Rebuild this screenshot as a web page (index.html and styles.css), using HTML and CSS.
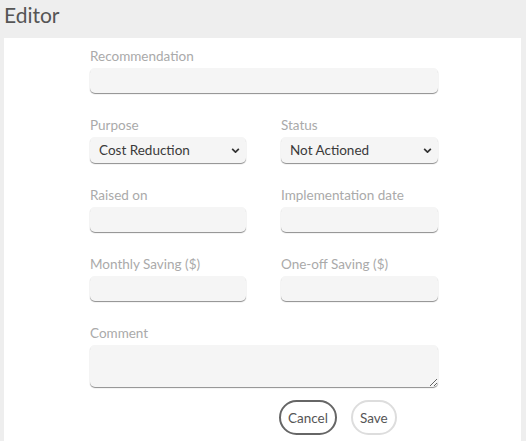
FILE: index.html
```html
<!DOCTYPE html>
<html lang="en">
  <head>
    <meta charset="UTF-8" />
    <meta name="viewport" content="width=device-width, initial-scale=1.0" />
    <title>Editor</title>
    <link rel="stylesheet" href="styles.css">
  </head>
  <body>
    <header class="editor-header">Editor</header>
    <main class="editor-panel">
      <form class="editor-form">
        <div class="editor-field editor-wide">
          <label for="recommendation">Recommendation</label>
          <input id="recommendation" type="text" />
        </div>

        <div class="editor-field">
          <label for="purpose">Purpose</label>
          <div class="editor-select">
            <select id="purpose">
              <option>Cost Reduction</option>
            </select>
            <svg viewBox="0 0 10 6" aria-hidden="true"><path d="M1 1l4 4 4-4" /></svg>
          </div>
        </div>
        <div class="editor-field">
          <label for="status">Status</label>
          <div class="editor-select">
            <select id="status">
              <option>Not Actioned</option>
            </select>
            <svg viewBox="0 0 10 6" aria-hidden="true"><path d="M1 1l4 4 4-4" /></svg>
          </div>
        </div>

        <div class="editor-field">
          <label for="raised">Raised on</label>
          <input id="raised" type="text" />
        </div>
        <div class="editor-field">
          <label for="implemented">Implementation date</label>
          <input id="implemented" type="text" />
        </div>

        <div class="editor-field">
          <label for="monthly">Monthly Saving ($)</label>
          <input id="monthly" type="text" />
        </div>
        <div class="editor-field">
          <label for="oneoff">One-off Saving ($)</label>
          <input id="oneoff" type="text" />
        </div>

        <div class="editor-field editor-wide">
          <label for="comment">Comment</label>
          <textarea id="comment"></textarea>
        </div>

        <div class="editor-actions">
          <button type="button" class="btn-cancel">Cancel</button>
          <button type="button" class="btn-save">Save</button>
        </div>
      </form>
    </main>
  </body>
</html>
```

FILE: styles.css
```css
html,
body {
  margin: 0;
  height: 100%;
}

body {
  background: #eee;
  font-family: Lato, "Open Sans", sans-serif;
  display: flex;
  flex-direction: column;
}

.editor-header {
  height: 38px;
  padding: 4px 0 0 4px;
  box-sizing: border-box;
  font-size: 21px;
  line-height: 22px;
  color: #555;
}

.editor-panel {
  flex: 1;
  margin: 0 5px 0 4px;
  background: #fff;
  padding: 10px 0 0 86px;
}

.editor-form {
  width: 348px;
  display: grid;
  grid-template-columns: 156px 157px;
  column-gap: 35px;
  row-gap: 24px;
}

.editor-wide {
  grid-column: 1 / -1;
}

.editor-field {
  display: flex;
  flex-direction: column;

  label {
    font-size: 13.5px;
    line-height: 16px;
    color: #aaa;
    margin-bottom: 4px;
  }

  input,
  select,
  textarea {
    box-sizing: border-box;
    width: 100%;
    border: none;
    border-radius: 5px;
    background: #f5f5f5;
    box-shadow: 0 1px 1px rgba(0, 0, 0, 0.45);
    font: inherit;
    font-size: 13.5px;
    color: #3a3a3a;
    margin: 0;
  }

  input {
    height: 25px;
    padding: 0 8px;
  }

  textarea {
    height: 42px;
    padding: 4px 8px;
    display: block;
  }
}

/* Select with its own chevron drawn over the box */
.editor-select {
  position: relative;

  select {
    appearance: none;
    height: 26px;
    padding: 0 24px 0 9px;
  }

  svg {
    position: absolute;
    right: 6px;
    top: 11px;
    width: 9px;
    height: 5px;
    fill: none;
    stroke: #333;
    stroke-width: 2;
    pointer-events: none;
  }
}

.editor-actions {
  grid-column: 2;
  margin: -11px 0 0 -2px;
  display: flex;
  gap: 14px;

  button {
    height: 35px;
    border-radius: 18px;
    background: #fff;
    font: inherit;
    font-size: 13.5px;
    color: #555;
    padding: 0 7px;
    cursor: pointer;
  }

  .btn-cancel {
    border: 2px solid #666;
  }

  .btn-save {
    border: 2px solid #ddd;
  }
}
```
